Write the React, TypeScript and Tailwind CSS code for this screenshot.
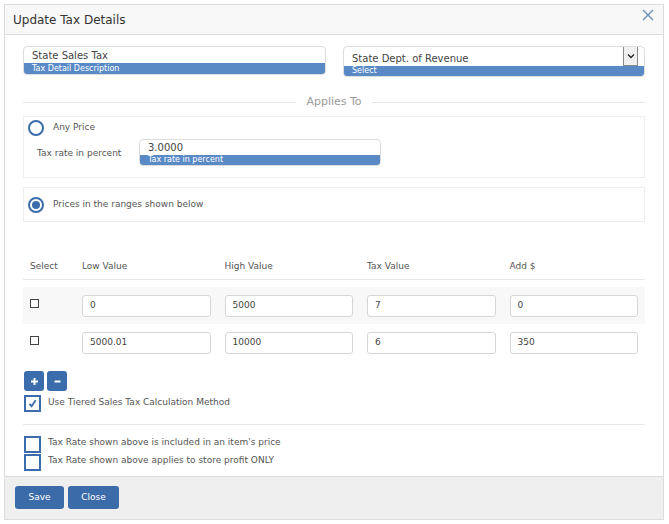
import React from "react";

const F = { fontFamily: '"DejaVu Sans", Verdana, sans-serif' };

function Radio({ checked }: { checked?: boolean }) {
  return (
    <div className="w-[16px] h-[16px] rounded-full border-2 border-[#3b6cab] flex items-center justify-center bg-white shrink-0">
      {checked && <div className="w-[8px] h-[8px] rounded-full bg-[#3b6cab]" />}
    </div>
  );
}

function Check({ checked }: { checked?: boolean }) {
  return (
    <div className="w-[17px] h-[17px] border-2 border-[#3b6cab] bg-white flex items-center justify-center shrink-0">
      {checked && (
        <svg width="11" height="11" viewBox="0 0 11 11">
          <path d="M2.5 5.8 L4.6 8.2 L8.6 2.2" fill="none" stroke="#3b6cab" strokeWidth="1.8" />
        </svg>
      )}
    </div>
  );
}

function Cell({ v }: { v: string }) {
  return (
    <div className="px-[7px]">
      <div className="h-[22px] border border-[#d6d6d6] rounded-[3px] bg-white flex items-center pl-[7px] text-[9px] text-[#444]">
        {v}
      </div>
    </div>
  );
}

export default function App() {
  const rows = [
    ["0", "5000", "7", "0"],
    ["5000.01", "10000", "6", "350"],
  ];
  return (
    <div className="w-[669px] h-[524px] bg-white pt-[4px] pl-[4px]" style={F}>
      <div className="w-[660px] h-[516px] border border-[#dcdcdc] flex flex-col">
        <div className="h-[30px] bg-[#f8f8f8] border-b border-[#dcdcdc] flex items-center justify-between pl-[8px] pr-[9px] shrink-0">
          <span className="text-[12px] text-[#333]">Update Tax Details</span>
          <svg width="12" height="12" viewBox="0 0 12 12" className="-mt-[9px]">
            <path d="M1 1 L11 11 M11 1 L1 11" stroke="#6a8fbf" strokeWidth="1.4" />
          </svg>
        </div>
        <div className="flex-1 px-[18px] pt-[11px] bg-white">
          <div className="flex gap-[17px]">
            <div className="w-[303px] h-[29px] border border-[#ddd] rounded-[4px] flex flex-col overflow-hidden">
              <div className="h-[16px] pl-[8px] text-[10px] text-[#444] flex items-center pt-[1px]">State Sales Tax</div>
              <div className="flex-1 bg-[#5a8ac6] text-white text-[8px] pl-[8px] leading-[11px]">Tax Detail Description</div>
            </div>
            <div className="flex-1 h-[31px] border border-[#ddd] rounded-[4px] flex flex-col overflow-hidden">
              <div className="h-[19px] flex items-start">
                <div className="flex-1 pl-[8px] text-[10px] text-[#444] pt-[4px]">State Dept. of Revenue</div>
                <div className="w-[15px] h-[19px] bg-[#f1f1f1] border border-[#8a8a8a] border-t-0 mr-[6px] flex items-center justify-center">
                  <svg width="8" height="6" viewBox="0 0 8 6">
                    <path d="M1 1.5 L4 4.5 L7 1.5" fill="none" stroke="#222" strokeWidth="1.3" />
                  </svg>
                </div>
              </div>
              <div className="flex-1 bg-[#5a8ac6] text-white text-[8px] pl-[8px] leading-[10px]">Select</div>
            </div>
          </div>

          <div className="flex items-center mt-[17px] h-[16px]">
            <div className="flex-1 h-px bg-[#e6e6e6]" />
            <span className="px-[10px] text-[11px] text-[#9a9a9a]">Applies To</span>
            <div className="flex-1 h-px bg-[#e6e6e6]" />
          </div>

          <div className="mt-[6px] border border-[#eeeeee] h-[62px] pl-[4px] pt-[3px]">
            <div className="flex items-center gap-[9px] h-[16px]">
              <Radio />
              <span className="text-[9px] text-[#555] -mt-[1px]">Any Price</span>
            </div>
            <div className="flex items-center mt-[3px]">
              <span className="text-[9px] text-[#555] pl-[9px] w-[111px] pt-[3px]">Tax rate in percent</span>
              <div className="w-[242px] h-[27px] border border-[#ddd] rounded-[4px] flex flex-col overflow-hidden">
                <div className="h-[17px] pl-[8px] text-[10px] text-[#444] flex items-center">3.0000</div>
                <div className="flex-1 bg-[#5a8ac6] text-white text-[8px] pl-[8px] leading-[10px]">Tax rate in percent</div>
              </div>
            </div>
          </div>

          <div className="mt-[9px] border border-[#eeeeee] h-[35px] pl-[4px] flex items-center">
            <div className="flex items-center gap-[9px]">
              <Radio checked />
              <span className="text-[9px] text-[#555]">Prices in the ranges shown below</span>
            </div>
          </div>

          <div className="mt-[38px]">
            <div className="grid grid-cols-[52px_1fr_1fr_1fr_1fr] text-[9px] text-[#555] h-[20px] items-start border-b border-[#e6e6e6]">
              <span className="pl-[7px]">Select</span>
              <span className="pl-[7px]">Low Value</span>
              <span className="pl-[7px]">High Value</span>
              <span className="pl-[7px]">Tax Value</span>
              <span className="pl-[7px]">Add $</span>
            </div>
            <div className="h-[7px]" />
            {rows.map((r, i) => (
              <div
                key={i}
                className={`grid grid-cols-[52px_1fr_1fr_1fr_1fr] items-center h-[37px] ${i === 0 ? "bg-[#f8f8f8]" : ""}`}
              >
                <div className="pl-[7px] pb-[4px]">
                  <div className="w-[9px] h-[9px] border border-[#444] bg-white" />
                </div>
                {r.map((v, j) => (
                  <Cell key={j} v={v} />
                ))}
              </div>
            ))}
          </div>

          <div className="flex gap-[3px] mt-[10px] ml-[1px]">
            <div className="w-[20px] h-[20px] bg-[#3b6cab] rounded-[3px] flex items-center justify-center">
              <svg width="9" height="9" viewBox="0 0 9 9"><path d="M4.5 1 V8 M1 4.5 H8" stroke="white" strokeWidth="2" /></svg>
            </div>
            <div className="w-[20px] h-[20px] bg-[#3b6cab] rounded-[3px] flex items-center justify-center">
              <svg width="9" height="9" viewBox="0 0 9 9"><path d="M1.5 4.5 H7.5" stroke="white" strokeWidth="2" /></svg>
            </div>
          </div>
          <div className="flex items-center gap-[7px] mt-[4px] ml-[1px]">
            <Check checked />
            <span className="text-[9px] text-[#555] -mt-[1px]">Use Tiered Sales Tax Calculation Method</span>
          </div>
          <div className="h-px bg-[#e6e6e6] mt-[12px]" />
          <div className="flex items-center gap-[7px] mt-[11px] ml-[1px]">
            <Check />
            <span className="text-[9px] text-[#555] -mt-[3px]">Tax Rate shown above is included in an item's price</span>
          </div>
          <div className="flex items-center gap-[7px] mt-[1px] ml-[1px]">
            <Check />
            <span className="text-[9px] text-[#555] -mt-[3px]">Tax Rate shown above applies to store profit ONLY</span>
          </div>
        </div>
        <div className="h-[43px] bg-[#efefef] border-t border-[#dcdcdc] flex items-start gap-[4px] pl-[10px] pt-[9px] shrink-0">
          <div className="w-[49px] h-[23px] bg-[#3c6ba9] rounded-[3px] text-white text-[9px] flex items-center justify-center">Save</div>
          <div className="w-[51px] h-[23px] bg-[#3c6ba9] rounded-[3px] text-white text-[9px] flex items-center justify-center">Close</div>
        </div>
      </div>
    </div>
  );
}
